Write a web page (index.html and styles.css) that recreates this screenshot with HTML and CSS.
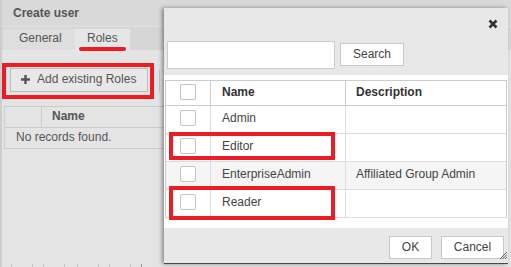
FILE: index.html
```html
<!DOCTYPE html>
<html>
<head>
<meta charset="utf-8">
<link rel="stylesheet" href="styles.css">
</head>
<body>
<div class="app">
  <div class="win-title">Create user</div>
  <div class="tabs">
    <div class="tab">General</div>
    <div class="tab tab-active">Roles<span class="mark-line"></span></div>
  </div>
  <div class="toolbar">
    <div class="mark-box">
      <button class="btn-add"><svg class="plus" viewBox="0 0 9 9" width="9" height="9"><path d="M3.3 0h2.4v3.3H9v2.4H5.7V9H3.3V5.7H0V3.3h3.3z" fill="#555"/></svg>Add existing Roles</button>
    </div>
    <div class="sep"></div>
  </div>
  <div class="grid">
    <div class="grid-head"><div class="gh-num"></div><div class="gh-name">Name</div></div>
    <div class="grid-row">No records found.</div>
  </div>
  <div class="ticks">
    <span></span><span></span><span></span><span></span><span></span><span></span><span></span><span></span><span class="dark"></span>
  </div>

  <div class="dialog">
    <div class="dlg-head">
      <svg class="close" viewBox="0 0 10 10" width="10" height="10"><path d="M1.5 1.5L8.5 8.5M8.5 1.5L1.5 8.5" stroke="#333" stroke-width="2.6" stroke-linecap="butt"/></svg>
    </div>
    <div class="search-row">
      <input class="search-input" type="text">
      <button class="btn">Search</button>
    </div>
    <div class="list">
      <div class="tbl">
        <div class="tr th"><div class="td c1"><span class="cb"></span></div><div class="td c2">Name</div><div class="td c3">Description</div></div>
        <div class="tr"><div class="td c1"><span class="cb"></span></div><div class="td c2">Admin</div><div class="td c3"></div></div>
        <div class="tr"><div class="td c1"><span class="cb"></span></div><div class="td c2">Editor</div><div class="td c3"></div></div>
        <div class="tr alt"><div class="td c1"><span class="cb"></span></div><div class="td c2">EnterpriseAdmin</div><div class="td c3">Affiliated Group Admin</div></div>
        <div class="tr"><div class="td c1"><span class="cb"></span></div><div class="td c2">Reader</div><div class="td c3"></div></div>
      </div>
    </div>
    <div class="footer">
      <button class="btn btn-ok">OK</button>
      <button class="btn btn-cancel">Cancel</button>
    </div>
    <svg class="grip" viewBox="0 0 7 7" width="7" height="7"><path d="M7 0L0 7M7 2.5L2.5 7M7 5L5 7" stroke="#555" stroke-width="0.9"/></svg>
    <div class="mark mark-editor"></div>
    <div class="mark mark-reader"></div>
  </div>
</div>
</body>
</html>
```
FILE: styles.css
```css
* { box-sizing: border-box; }
html, body { margin: 0; padding: 0; }
body {
  width: 511px;
  height: 267px;
  overflow: hidden;
  background: #d6d6d6;
  font-family: "Liberation Sans", Arial, sans-serif;
  font-size: 12px;
  color: #444;
}
.app {
  position: relative;
  width: 511px;
  height: 267px;
  background: #e4e4e4;
  border-left: 2px solid #cdcdcd;
  display: flex;
  flex-direction: column;
}
.win-title {
  height: 27px;
  line-height: 27px;
  padding-left: 11px;
  background: #d9d9d9;
  font-weight: bold;
  color: #555;
  border-bottom: 1px solid #e0e0e0;
}
.tabs {
  height: 23px;
  background: #d6d6d6;
  display: flex;
  padding: 2px 0 0 1px;
}
.tab {
  position: relative;
  width: 72px;
  height: 21px;
  line-height: 19px;
  padding-left: 16px;
  background: #dedede;
  color: #555;
}
.tab-active {
  width: 55px;
  padding-left: 12px;
  background: #e6e6e6;
}
.mark-line {
  position: absolute;
  left: 4px;
  top: 18px;
  width: 47px;
  height: 4px;
  border-radius: 2px;
  background: #ec1c24;
}
.toolbar {
  display: flex;
  align-items: flex-start;
  padding-top: 13px;
}
.mark-box {
  width: 152px;
  height: 36px;
  border: 4px solid #ec1c24;
  padding: 1px 0 0 4px;
}
.btn-add {
  display: flex;
  align-items: center;
  width: 138px;
  height: 24px;
  padding: 0 0 2px 10px;
  border: 1px solid #bdbdbd;
  background: #e8e8e8;
  font-family: inherit;
  font-size: 12px;
  color: #555;
}
.plus { margin-right: 7px; margin-top: 1px; }
.sep {
  width: 1px;
  height: 22px;
  margin: 7px 0 0 5px;
  background: #c8c8c8;
}
.grid {
  margin: 7px 0 0 2px;
  width: 200px;
  border-left: 1px solid #cccccc;
  border-top: 1px solid #cccccc;
}
.grid-head {
  display: flex;
  height: 21px;
  border-bottom: 1px solid #cccccc;
}
.gh-num { width: 37px; border-right: 1px solid #cccccc; }
.gh-name {
  padding-left: 10px;
  line-height: 19px;
  font-weight: bold;
  color: #555;
}
.grid-row {
  height: 21px;
  line-height: 19px;
  padding-left: 11px;
  border-bottom: 1px solid #cccccc;
  color: #555;
}
.ticks {
  margin-top: auto;
  height: 3px;
  display: flex;
  padding-left: 9px;
}
.ticks span { width: 1px; height: 3px; background: #c2c2c2; margin-right: 20px; }
.ticks span:nth-child(2n) { margin-right: 10px; }
.ticks span:nth-child(4) { margin-right: 12px; }
.ticks span.dark { background: #999; }

.dialog {
  position: absolute;
  left: 162px;
  top: 8px;
  width: 344px;
  height: 256px;
  background: #e8e8e8;
  border-bottom: 1px solid #4a4a4a;
  box-shadow: -2px 0 4px rgba(0, 0, 0, 0.4);
  display: flex;
  flex-direction: column;
}
.dlg-head {
  height: 33px;
  display: flex;
  justify-content: flex-end;
  align-items: flex-start;
  padding: 11px 10px 0 0;
}
.close { display: block; }
.search-row {
  height: 34px;
  display: flex;
  align-items: flex-start;
  padding-left: 3px;
}
.search-input {
  width: 168px;
  height: 28px;
  border: 1px solid #cccccc;
  background: #fff;
  margin: 0;
}
.btn {
  height: 23px;
  border: 1px solid #c8c8c8;
  background: #fff;
  font-family: inherit;
  font-size: 12px;
  color: #444;
  padding: 0 0 1px;
  margin: 0;
}
.search-row .btn { width: 64px; margin: 2px 0 0 5px; }
.list {
  height: 153px;
  background: #fff;
  padding: 5px 0 0 1px;
}
.tbl {
  width: 342px;
  border-left: 1px solid #cccccc;
  border-right: 1px solid #cccccc;
}
.tr {
  display: grid;
  grid-template-columns: 45px 135px 1fr;
  height: 28px;
  border-bottom: 1px solid #dddddd;
}
.tr.th {
  height: 26px;
  border-top: 1px solid #cccccc;
  border-bottom: 1px solid #cccccc;
  font-weight: bold;
  color: #333;
}
.tr.alt { background: #f5f5f5; }
.td {
  display: flex;
  align-items: center;
  padding-bottom: 3px;
  color: #444;
}
.th .td { color: #333; border-right-color: #cccccc; }
.c1 { justify-content: center; border-right: 1px solid #dddddd; }
.c2 { padding-left: 11px; border-right: 1px solid #dddddd; }
.c3 { padding-left: 10px; }
.cb {
  width: 16px;
  height: 16px;
  border: 1px solid #c4c4c4;
  border-radius: 2px;
  background: #fff;
}
.footer {
  flex: 1;
  display: flex;
  justify-content: flex-end;
  align-items: flex-start;
  gap: 9px;
  padding: 8px 4px 0 0;
}
.btn-ok { width: 43px; }
.btn-cancel { width: 63px; }
.grip { position: absolute; right: 1px; bottom: 4px; }
.mark {
  position: absolute;
  left: 5px;
  width: 166px;
  border: 4px solid #ec1c24;
}
.mark-editor { top: 124px; height: 28px; }
.mark-reader { top: 178px; height: 34px; }
```
